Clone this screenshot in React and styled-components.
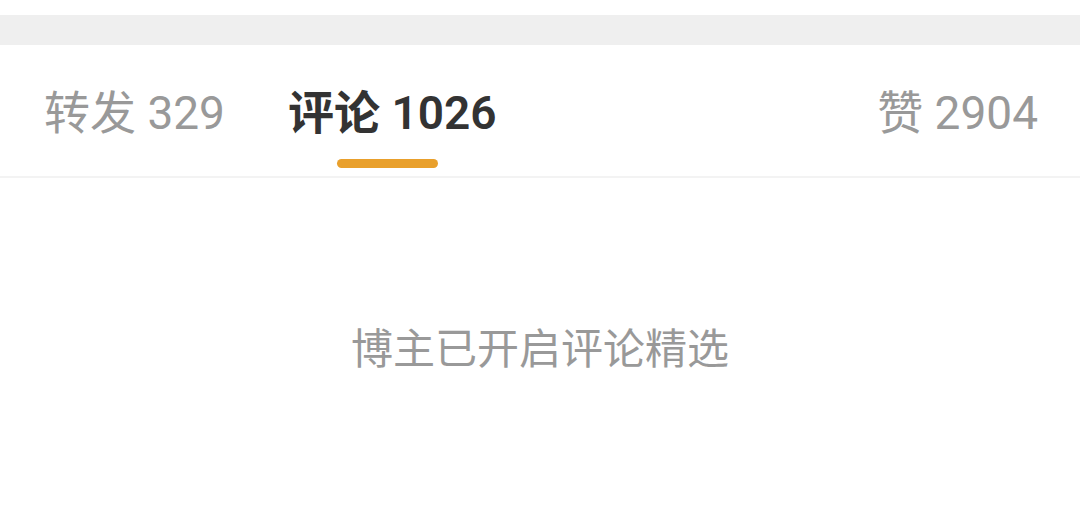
import React from "react";
import styled, { createGlobalStyle } from "styled-components";

const Global = createGlobalStyle`
  html, body { margin: 0; padding: 0; background: #ffffff; }
  body { font-family: Roboto, "Noto Sans CJK SC", "Noto Sans", sans-serif; }
`;

const Page = styled.div`
  width: 1080px;
  height: 516px;
  background: #fff;
  padding-top: 15px;
  box-sizing: border-box;
  display: flex;
  flex-direction: column;
`;

const Band = styled.div`
  height: 30px;
  background: #efefef;
`;

const TabBar = styled.div`
  height: 131px;
  display: flex;
  align-items: flex-start;
  padding: 0 42px 0 44px;
  border-bottom: 2px solid #f3f3f3;
`;

const Tab = styled.div`
  display: flex;
  flex-direction: column;
  align-items: center;
  padding-top: 40px;
  margin-left: ${(p) => (p.$right ? "auto" : p.$first ? "0" : "63px")};
`;

const Label = styled.span`
  font-size: 46px;
  line-height: 56px;
  white-space: nowrap;
  color: ${(p) => (p.$active ? "#333333" : "#999999")};
  font-weight: ${(p) => (p.$active ? 600 : 400)};
`;

const Indicator = styled.div`
  width: 101px;
  height: 9px;
  border-radius: 5px;
  margin-top: 18px;
  margin-right: 10px;
  background: #e9a02c;
`;

const Content = styled.div`
  flex: 1;
  display: flex;
  justify-content: center;
  padding-top: 144px;
`;

const Notice = styled.span`
  font-size: 42px;
  line-height: 56px;
  color: #999999;
`;

export default function App() {
  return (
    <>
      <Global />
      <Page>
        <Band />
        <TabBar>
          <Tab $first>
            <Label>转发 329</Label>
          </Tab>
          <Tab>
            <Label $active>评论 1026</Label>
            <Indicator />
          </Tab>
          <Tab $right>
            <Label>赞 2904</Label>
          </Tab>
        </TabBar>
        <Content>
          <Notice>博主已开启评论精选</Notice>
        </Content>
      </Page>
    </>
  );
}
